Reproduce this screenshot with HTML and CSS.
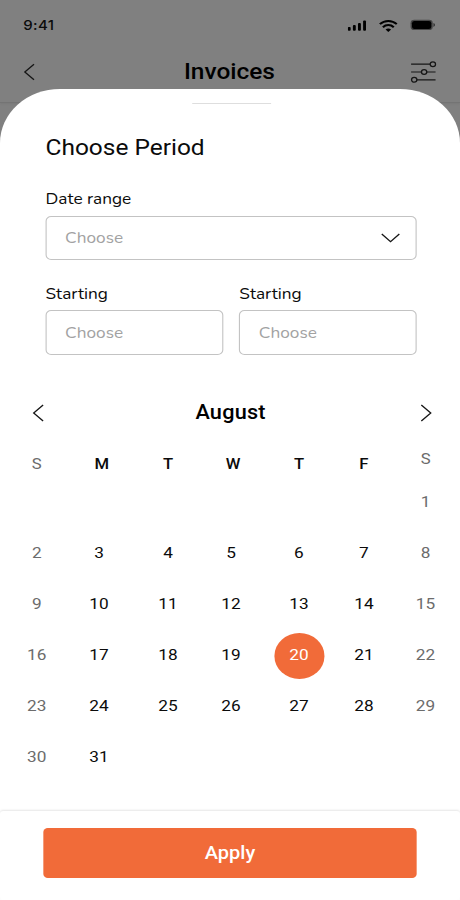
FILE: index.html
```html
<!DOCTYPE html>
<html lang="en">
<head>
<meta charset="utf-8">
<title>Invoices</title>
<link rel="stylesheet" href="styles.css">
</head>
<body>
<div class="screen">
  <header class="backdrop">
    <div class="status">
      <span class="time">9:41</span>
      <span class="status-icons">
        <svg class="signal" width="17" height="11" viewBox="0 0 17 11"><rect x="0" y="7" width="2.6" height="3.7" rx=".9"/><rect x="4.6" y="5" width="2.6" height="5.7" rx=".9"/><rect x="9.2" y="3" width="2.6" height="7.7" rx=".9"/><rect x="13.8" y=".5" width="2.6" height="10.2" rx=".9"/></svg>
        <svg class="wifi" width="17" height="13" viewBox="0 0 17 13" fill="none" stroke="#000" stroke-width="2"><path d="M.9 5.1C5.1.8 11.9.8 16.1 5.1M3.6 8.2c2.8-2.8 7-2.8 9.8 0"/><path d="M6 10.5c1.5-1.4 3.5-1.4 5 0L8.5 13z" fill="#000" stroke="none"/></svg>
        <svg class="battery" width="23" height="12" viewBox="0 0 23 12"><rect x=".5" y=".8" width="20" height="10.3" rx="3.4" fill="#464646"/><rect x="1.8" y="2" width="17.4" height="7.9" rx="2.2"/><path d="M21.1 4c1.9.8 1.9 3.1 0 3.9z" fill="#303030"/></svg>
      </span>
    </div>
    <div class="nav">
      <svg width="11" height="18" viewBox="0 0 11 18" class="line"><path d="M9.6 1.2 1.3 9l8.3 7.8"/></svg>
      <h1>Invoices</h1>
      <svg width="24" height="22" viewBox="0 0 24 22" class="line"><path d="M1 3.2h17.2M1 11h9.2M15.2 11H23M6.2 18.8H23"/><circle cx="20.6" cy="3.2" r="2.4"/><circle cx="12.7" cy="11" r="2.4"/><circle cx="3.8" cy="18.8" r="2.4"/></svg>
    </div>
  </header>

  <main class="sheet">
    <div class="handle"></div>
    <h2>Choose Period</h2>
    <form class="fields">
      <label class="field wide"><span class="label">Date range</span>
        <span class="box">Choose<svg width="17" height="10" viewBox="0 0 17 10" class="line"><path d="m.6 1 7.9 7.6L16.4 1"/></svg></span></label>
      <label class="field"><span class="label">Starting</span><span class="box">Choose</span></label>
      <label class="field"><span class="label">Starting</span><span class="box">Choose</span></label>
    </form>

    <div class="month">
      <svg width="11" height="18" viewBox="0 0 11 18" class="line"><path d="M9.8 1 1.3 9l8.5 8"/></svg>
      <h3>August</h3>
      <svg width="11" height="18" viewBox="0 0 11 18" class="line"><path d="m1.2 1 8.5 8-8.5 8"/></svg>
    </div>
    <div class="weekdays"><span class="off">S</span><span>M</span><span>T</span><span>W</span><span>T</span><span>F</span><span class="off last">S</span></div>
    <div class="days">
      <span class="off first">1</span>
      <span class="off">2</span><span>3</span><span>4</span><span>5</span><span>6</span><span>7</span><span class="off">8</span>
      <span class="off">9</span><span>10</span><span>11</span><span>12</span><span>13</span><span>14</span><span class="off">15</span>
      <span class="off">16</span><span>17</span><span>18</span><span>19</span><span class="selected">20</span><span>21</span><span class="off">22</span>
      <span class="off">23</span><span>24</span><span>25</span><span>26</span><span>27</span><span>28</span><span class="off">29</span>
      <span class="off">30</span><span>31</span>
    </div>
    <footer><button type="button">Apply</button></footer>
  </main>
</div>
</body>
</html>
```
FILE: styles.css
```css
* { box-sizing: border-box; }
html, body { margin: 0; }
body { width: 460px; height: 900px; overflow: hidden; background: #808080; }

/* The 414px design is stretched to fill the 460px viewport. */
.screen {
  width: 414px;
  height: 900px;
  transform: scaleX(1.11111);
  transform-origin: 0 0;
  display: flex;
  flex-direction: column;
  font-family: Roboto, sans-serif;
  color: #0b0b0b;
  background: #808080;
}
h1, h2, h3 { margin: 0; }
svg { display: block; flex: none; }
.line { fill: none; stroke: #161616; stroke-width: 1.2; }

.backdrop {
  height: 103px;
  flex: none;
  border-bottom: 1px solid #747474;
  box-shadow: 0 1px 2px rgba(0, 0, 0, .06);
}
.status { height: 50px; padding: 0 22px 0 21px; display: flex; align-items: center; justify-content: space-between; }
.time { font: 500 13.5px/50px Inter, sans-serif; letter-spacing: .3px; }
.status-icons { display: flex; align-items: center; gap: 11px; }
.nav { height: 44px; padding: 0 21px 0 21px; display: flex; align-items: center; justify-content: space-between; }
h1 { font-size: 22px; line-height: 43px; font-weight: 500; color: #000; margin: -1px 0 0 12px; }

.sheet {
  position: relative;
  margin-top: -14.3px;
  flex: 1;
  background: #fff;
  border-radius: 54px 54px 0 0;
  display: flex;
  flex-direction: column;
}
.handle { width: 71.5px; height: 1.5px; margin: 14px 0 0 172.5px; background: #dedede; flex: none; }
h2 { margin: 28.8px 0 0 41px; font-size: 22px; line-height: 30px; font-weight: 400; letter-spacing: 0; }

.fields { margin: 24.2px 38.8px 0 41px; display: grid; grid-template-columns: 1fr 1fr; column-gap: 14.6px; row-gap: 21.5px; }
.field { display: flex; flex-direction: column; font-family: Nunito, Lato, sans-serif; font-size: 15.5px; letter-spacing: 0; }
.wide { grid-column: 1 / 3; }
.label { line-height: 24px; margin-bottom: 4.5px; }
.box {
  height: 44.5px;
  padding: 0 14.5px 0 16.6px;
  border: 1.2px solid #c3c3c3;
  border-radius: 5px;
  display: flex;
  align-items: center;
  justify-content: space-between;
  color: #a2a2a2;
}

.month { margin: 41.3px 25px 0 29px; height: 34px; display: flex; align-items: center; justify-content: space-between; }
h3 { font-size: 19.5px; line-height: 34px; font-weight: 500; color: #000; letter-spacing: .2px; margin-right: 3px; }

.weekdays, .days { display: grid; padding-left: 10.1px; }
.weekdays span, .days span { width: 46px; text-align: center; position: relative; }
.weekdays {
  grid-template-columns: 58.5px 59.6px 58.5px 59.5px 58.2px 55.8px 46px;
  height: 46px;
  margin-top: 11.2px;
  font-size: 15px;
  line-height: 46px;
  font-weight: 500;
}
.weekdays .off { font-weight: 400; }
.weekdays .last { margin-top: -5.5px; }
.days {
  grid-template-columns: 56px 62.1px 56.7px 61.2px 58.5px 55.4px 46px;
  grid-auto-rows: 51px;
  margin-top: -10.5px;
  font-size: 15.5px;
  line-height: 51px;
}
.off { color: #6c6c6c; }
.first { grid-column: 7; }
.selected { color: #fff; z-index: 0; }
.selected::before {
  content: "";
  position: absolute;
  z-index: -1;
  left: 1px;
  top: 3.7px;
  width: 45.3px;
  height: 45.6px;
  border-radius: 50%;
  background: #f16b39;
}

footer { margin-top: auto; height: 89px; padding: 17px 38.7px 0; border-radius: 3px; box-shadow: 0 -1px 2px rgba(0, 0, 0, .1); }
button {
  display: block;
  width: 100%;
  height: 50px;
  padding: 0;
  border: 0;
  border-radius: 4px;
  background: #f16b39;
  color: #fff;
  font: 500 18px/50px Roboto, sans-serif;
  letter-spacing: 0;
}
```
